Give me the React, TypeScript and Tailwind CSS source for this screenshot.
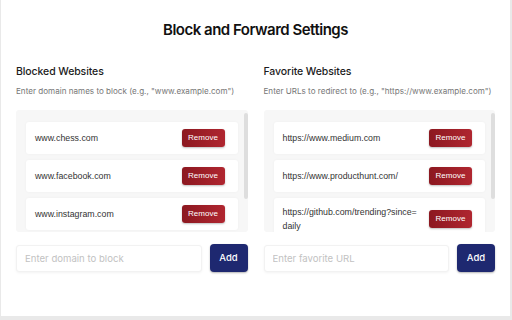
import React from "react";

const blocked = ["www.chess.com", "www.facebook.com", "www.instagram.com"];
const favorites = [
  "https://www.medium.com",
  "https://www.producthunt.com/",
  "https://github.com/trending?since=\u200Bdaily",
];

interface ColumnProps {
  title: string;
  hint: string;
  items: string[];
  placeholder: string;
}

const Column: React.FC<ColumnProps> = ({ title, hint, items, placeholder }) => {
  return (
    <div className="flex flex-col w-[232px]">
      <h2 className="text-[10.5px] leading-[16px] font-medium text-[#1c1c1c] tracking-[-0.1px]">{title}</h2>
      <p className="mt-[5px] text-[8.1px] leading-[12px] text-[#777] whitespace-nowrap">{hint}</p>
      <div className="mt-[13px] h-[122px] bg-[#f7f7f7] rounded-[3px] overflow-hidden flex">
        <ul className="flex-1 flex flex-col gap-[6px] pl-[10px] pr-[6px] pt-[12px]">
          {items.map((item) => (
            <li
              key={item}
              className="flex items-center justify-between bg-white rounded-[3px] shadow-[0_0_3px_rgba(0,0,0,0.04)] pl-[9px] pr-[13px] py-[7px] min-h-[32px] shrink-0"
            >
              <span className="flex-1 min-w-0 text-[8.8px] leading-[14px] text-[#333] pr-[8px] font-['Liberation_Sans',Arial,sans-serif]">
                {item}
              </span>
              <button className="shrink-0 w-[43px] h-[18px] rounded-[3px] bg-gradient-to-r from-[#8c1820] to-[#b02630] text-white text-[8px] font-['Liberation_Sans',Arial,sans-serif] shadow-[0_1px_2px_rgba(0,0,0,0.25)]">
                Remove
              </button>
            </li>
          ))}
        </ul>
        <div className="w-[4px] pt-[3px]">
          <div className="h-[86px] bg-[#dedede] rounded-[2px]" />
        </div>
      </div>
      <div className="mt-[12px] flex items-center gap-[8px]">
        <input
          placeholder={placeholder}
          className="flex-1 h-[27px] bg-white rounded-[3px] border border-[#f2f2f2] shadow-[0_1px_3px_rgba(0,0,0,0.05)] px-[8px] text-[9.6px] placeholder:text-[#c2c2c2] outline-none"
        />
        <button className="w-[38px] h-[28px] rounded-[4px] bg-[#1e2870] text-white text-[9.5px] font-medium shadow-[0_1px_2px_rgba(0,0,0,0.3)]">
          Add
        </button>
      </div>
    </div>
  );
};

export default function App() {
  return (
    <div className="w-[512px] h-[320px] bg-[#e9e9e9] font-['Inter',sans-serif]">
      <div className="ml-[1px] mr-[2px] h-[316px] bg-white px-[15px] pt-[20px]">
        <h1 className="text-center text-[15px] leading-[20px] font-semibold text-[#111] tracking-[-0.5px]">
          Block and Forward Settings
        </h1>
        <div className="mt-[24px] flex gap-[16px]">
          <Column
            title="Blocked Websites"
            hint={'Enter domain names to block (e.g., "www.example.com")'}
            items={blocked}
            placeholder="Enter domain to block"
          />
          <Column
            title="Favorite Websites"
            hint={'Enter URLs to redirect to (e.g., "https://www.example.com")'}
            items={favorites}
            placeholder="Enter favorite URL"
          />
        </div>
      </div>
    </div>
  );
}
